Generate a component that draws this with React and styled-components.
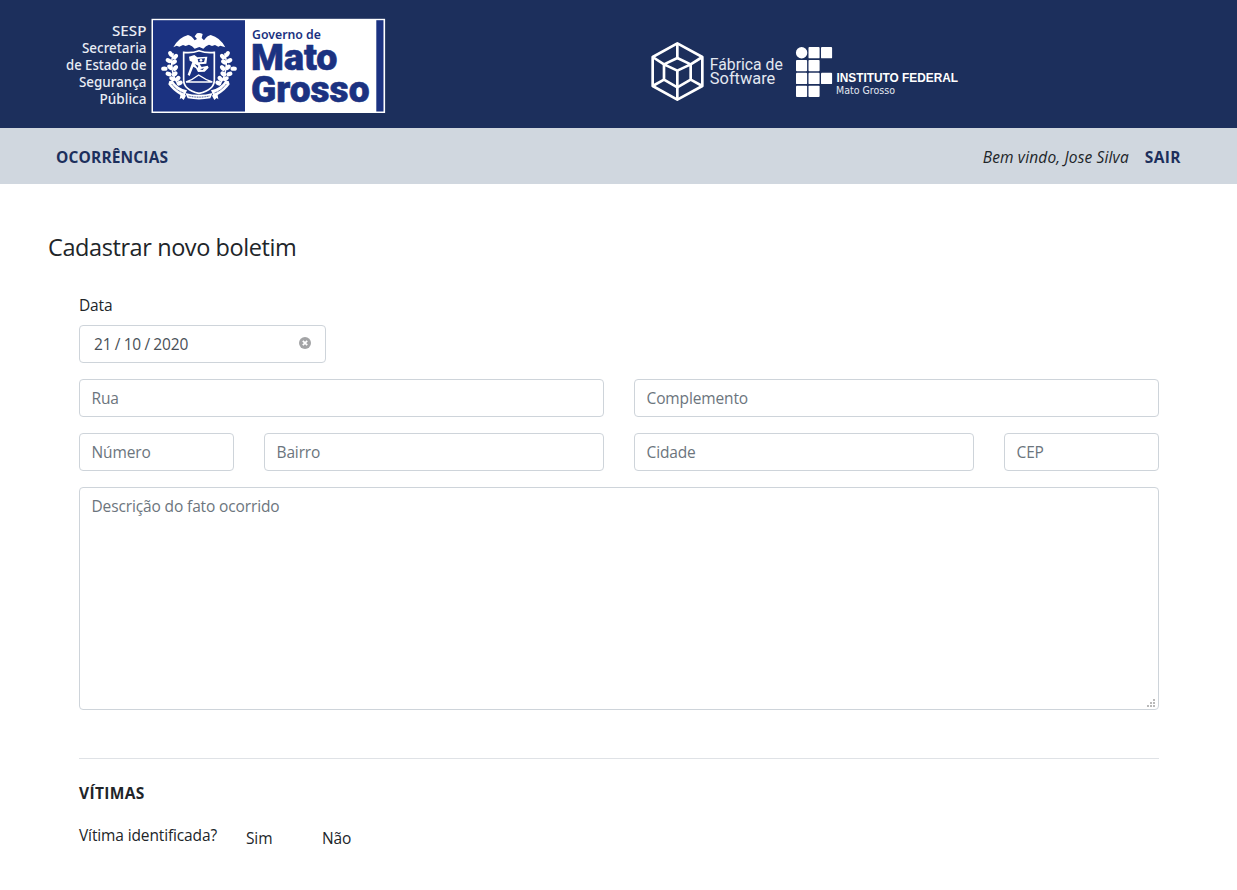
import React from "react";
import styled, { createGlobalStyle, css } from "styled-components";

const GlobalStyle = createGlobalStyle`
  *, *::before, *::after { box-sizing: border-box; }
  html, body { margin: 0; background: #fff; overflow: hidden; }
  body {
    font-family: "Open Sans", "Noto Sans", sans-serif;
    font-size: 15.5px;
    line-height: 24px;
    letter-spacing: -0.13px;
    color: #212529;
  }
`;

const Header = styled.header`
  display: flex;
  height: 128px;
  padding: 16px 0 0 64px;
  gap: 262px;
  background: #1c2f5c;
  letter-spacing: 0;
`;

const Nav = styled.nav`
  display: flex;
  align-items: center;
  justify-content: space-between;
  height: 56px;
  padding: 1px 56px 0;
  background: #d0d7df;
`;

const NavLink = styled.a`
  font-weight: 700;
  color: #1c2f5c;
  letter-spacing: ${(p) => p.$track || "0"};
`;

const Session = styled.div`
  display: flex;
  gap: 16px;
`;

const Welcome = styled.span`
  font-style: italic;
  letter-spacing: 0.15px;
`;

const Title = styled.h1`
  margin: 0;
  padding: 48px 48px 0;
  font-size: 23.5px;
  font-weight: 400;
  line-height: 30px;
  letter-spacing: -0.41px;
`;

const Form = styled.form`
  display: grid;
  grid-template-columns: repeat(12, 62.5px);
  column-gap: 30px;
  row-gap: 16px;
  margin: 31px 0 0 79px;
  width: 1080px;
`;

const Field = styled.div`
  grid-column: ${(p) => p.$start || "auto"} / span ${(p) => p.$span};
`;

const Label = styled.label`
  display: block;
  margin-bottom: 8px;
`;

const control = css`
  display: block;
  width: 100%;
  border: 1px solid #ced4da;
  border-radius: 4px;
  background: #fff;
  font: inherit;
  letter-spacing: inherit;
  color: #495057;
  outline: none;
  &::placeholder { color: #6c757d; opacity: 1; }
`;

const Input = styled.input`
  ${control}
  height: 38px;
  padding: 6px 11.5px;
`;

const DateBox = styled.div`
  ${control}
  display: flex;
  align-items: center;
  justify-content: space-between;
  width: 247px;
  height: 38px;
  padding: 0 14px;
`;

const DateParts = styled.span`
  display: flex;
  gap: 3.3px;
`;

const ClearIcon = styled.svg`
  margin-bottom: 2px;
`;

const AreaWrap = styled(Field)`
  display: grid;
`;

const TextArea = styled.textarea`
  ${control}
  grid-area: 1 / 1;
  height: 223px;
  padding: 6px 11.5px;
  resize: none;
`;

const Grip = styled.svg`
  grid-area: 1 / 1;
  place-self: end;
  margin: 0 3px 2px 0;
`;

const Victims = styled.section`
  margin: 48px 0 0 79px;
  width: 1080px;
  border-top: 1px solid #dfe2e6;
`;

const SectionTitle = styled.h2`
  margin: 22px 0 0;
  font-size: 15.5px;
  font-weight: 700;
  line-height: 24px;
  letter-spacing: 0.35px;
`;

const Question = styled.div`
  display: flex;
  margin-top: 18px;
`;

const Prompt = styled.span`
  width: 167px;
`;

const Option = styled.span`
  width: 76px;
  padding-top: 3px;
`;

const STATE_LINES = [
  ["SESP", 112, 34.5],
  ["Secretaria", 82, 64.5],
  ["de Estado de", 66, 80.5],
  ["Segurança", 79, 67.5],
  ["Pública", 99.5, 47],
];

const LEAVES = [
  [62, 114, 60], [76, 122, -50], [56, 134, 30], [72, 138, -35],
  [43, 158, 0], [60, 154, 45], [76, 156, -50], [56, 174, 20],
  [74, 174, -40], [67, 188, 25], [83, 188, -45], [89, 201, -30],
];

function Branch() {
  return (
    <g fill="#fff">
      <path d="M70 112Q54 160 86 208" fill="none" stroke="#fff" strokeWidth="4" />
      {LEAVES.map(([x, y, r]) => (
        <ellipse key={`${x}-${y}`} cx={x} cy={y} rx="9.5" ry="6.5" transform={`rotate(${r} ${x} ${y})`} />
      ))}
    </g>
  );
}

function Crest() {
  return (
    <g transform="translate(150 16) scale(.33333)">
      <Branch />
      <g transform="translate(294 0) scale(-1 1)"><Branch /></g>
      <path fill="#fff" d="M70 94Q86 64 114 57Q126 60 134 73L141 69L134 61L141 52Q150 50 158 54L155 66L162 73Q170 60 182 57Q210 64 226 94L211 89L205 92L195 87L186 90L177 86L168 91L160 98L148 93L134 98L126 91L117 86L107 90L99 87L88 92L80 89Z" />
      <path d="M101 109Q126 112 147 104Q170 112 193 109V192Q193 222 147 232Q101 222 101 192Z" fill="#1b3281" stroke="#fff" strokeWidth="5" />
      <path d="M108 198Q128 191 146 177Q168 192 187 198Z" fill="#1b3281" stroke="#fff" strokeWidth="4" />
      <path fill="#fff" d="M117 122L133 117L142 124L172 122L169 143L149 145L155 153L173 149L176 155L164 167L144 168L138 157L130 152L119 180L113 176L127 138L119 134Z" />
      <path fill="#1b3281" d="M143 129L165 127L162 138L145 139ZM134 144L145 149L143 156ZM150 160L162 157L158 162Z" />
      <circle cx="153" cy="133" r="4" fill="#fff" />
      <path fill="#fff" d="M58 195L68 194Q82 216 111 223L105 236L108 239L101 252L94 246L89 250L91 237Q68 224 55 205Z" />
      <path fill="#fff" d="M236 195L226 194Q212 216 183 223L189 236L186 239L193 252L200 246L205 250L203 237Q226 224 239 205Z" />
      <path fill="#fff" d="M106 231Q147 242 188 231L181 247Q147 254 113 247Z" />
      <path d="M66 205Q80 224 101 231M228 205Q214 224 193 231M116 240Q147 247 178 240" fill="none" stroke="#1b3281" strokeWidth="3" strokeDasharray="3 2" />
    </g>
  );
}

function StateLogo() {
  return (
    <svg width="324" height="100" viewBox="64 16 324 100" fontFamily="'Noto Sans', 'Open Sans', sans-serif">
      {STATE_LINES.map(([text, x, width], i) => (
        <text key={text} x={x} y={36 + i * 17.1} textLength={width} lengthAdjust="spacingAndGlyphs" fontSize="13.5" fontWeight="500" fill="#e9edf5">
          {text}
        </text>
      ))}
      <rect x="151.5" y="18.8" width="233.6" height="94.2" fill="#fff" />
      <rect x="153" y="20.2" width="92" height="91.3" fill="#1b3281" />
      <rect x="376.3" y="20.2" width="7.2" height="91.3" fill="#1b3281" />
      <Crest />
      <g fill="#1b3281" stroke="#1b3281">
        <text x="252" y="39.2" textLength="69" lengthAdjust="spacingAndGlyphs" fontSize="12.8" fontWeight="600" strokeWidth="0">Governo de</text>
        <g fontFamily="Roboto, sans-serif" fontSize="36.5" fontWeight="900" strokeWidth="0.6" strokeLinejoin="round">
          <text x="251" y="70.3" textLength="86.5" lengthAdjust="spacingAndGlyphs">Mato</text>
          <text x="251" y="101.6" textLength="118.5" lengthAdjust="spacingAndGlyphs">Grosso</text>
        </g>
      </g>
    </svg>
  );
}

const IF_BLOCKS = [
  [1, 0], [2, 0], [0, 1], [1, 1], [0, 2], [1, 2], [2, 2], [0, 3], [1, 3],
];

function PartnerLogos() {
  return (
    <svg width="312" height="100" viewBox="650 16 312 100" fill="#fff">
      <g transform="translate(640 30) scale(.33333)" fill="none" stroke="#fff" strokeWidth="8" strokeLinejoin="round">
        <path d="M112 40L187 81V168L112 209L38 168V81Z" />
        <path d="M112 84L152 103V149L112 172L72 149V103ZM72 103L112 122L152 103" />
        <path d="M112 40V84M187 81L152 103M187 168L152 149M112 209V122M38 168L72 149M38 81L72 103" />
      </g>
      <g fontFamily="Roboto, sans-serif" fontSize="15.6" fill="#e3e8f0">
        <text x="709.8" y="69.5" textLength="73" lengthAdjust="spacingAndGlyphs">Fábrica de</text>
        <text x="709.8" y="84.2" textLength="65.5" lengthAdjust="spacingAndGlyphs">Software</text>
      </g>
      <circle cx="801.6" cy="52.8" r="5.7" />
      {IF_BLOCKS.map(([c, r]) => (
        <rect key={`${c}${r}`} x={796 + c * 12.5} y={47 + r * 12.9} width="11.1" height="11.3" rx="0.9" />
      ))}
      <text x="836.5" y="82" textLength="121.5" lengthAdjust="spacingAndGlyphs" fontFamily="'Liberation Sans', sans-serif" fontWeight="700" fontSize="12">INSTITUTO FEDERAL</text>
      <text x="836" y="94" textLength="59" lengthAdjust="spacingAndGlyphs" fontFamily="'DejaVu Sans', sans-serif" fontSize="9.6" fill="#e3e8f0">Mato Grosso</text>
    </svg>
  );
}

export default function App() {
  return (
    <>
      <GlobalStyle />
      <Header>
        <StateLogo />
        <PartnerLogos />
      </Header>
      <Nav>
        <NavLink $track="0.15px">OCORRÊNCIAS</NavLink>
        <Session>
          <Welcome>Bem vindo, Jose Silva</Welcome>
          <NavLink $track="0.4px">SAIR</NavLink>
        </Session>
      </Nav>
      <Title>Cadastrar novo boletim</Title>
      <Form>
        <Field $span={3}>
          <Label>Data</Label>
          <DateBox>
            <DateParts>
              <span>21</span>
              <span>/</span>
              <span>10</span>
              <span>/</span>
              <span>2020</span>
            </DateParts>
            <ClearIcon width="12" height="12" viewBox="0 0 12 12">
              <circle cx="6" cy="6" r="6" fill="#a3a4a6" />
              <path d="M3.8 3.8L8.2 8.2M8.2 3.8L3.8 8.2" stroke="#fff" strokeWidth="1.7" />
            </ClearIcon>
          </DateBox>
        </Field>
        <Field $start={1} $span={6}><Input placeholder="Rua" /></Field>
        <Field $span={6}><Input placeholder="Complemento" /></Field>
        <Field $span={2}><Input placeholder="Número" /></Field>
        <Field $span={4}><Input placeholder="Bairro" /></Field>
        <Field $span={4}><Input placeholder="Cidade" /></Field>
        <Field $span={2}><Input placeholder="CEP" /></Field>
        <AreaWrap $span={12}>
          <TextArea placeholder="Descrição do fato ocorrido" />
          <Grip width="9" height="9" fill="#b9b9b9">
            <path d="M6 0h2v2h-2zM3 3h2v2h-2zM6 3h2v2h-2zM0 6h2v2h-2zM3 6h2v2h-2zM6 6h2v2h-2z" />
          </Grip>
        </AreaWrap>
      </Form>
      <Victims>
        <SectionTitle>VÍTIMAS</SectionTitle>
        <Question>
          <Prompt>Vítima identificada?</Prompt>
          <Option>Sim</Option>
          <Option>Não</Option>
        </Question>
      </Victims>
    </>
  );
}
